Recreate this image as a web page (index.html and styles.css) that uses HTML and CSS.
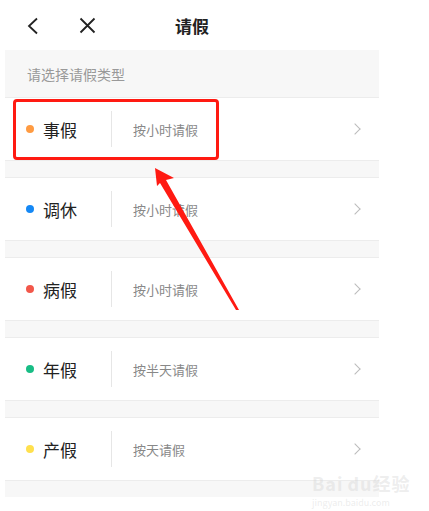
FILE: index.html
```html
<!DOCTYPE html>
<html lang="zh-CN">
<head>
  <meta charset="UTF-8" />
  <meta name="viewport" content="width=device-width, initial-scale=1.0" />
  <title>请假</title>
  <link rel="stylesheet" href="styles.css">
</head>
<body>
  <div class="phone">
    <!-- 顶部导航 -->
    <div class="header">
      <div class="nav-left">
        <svg class="icon-back" width="12" height="18" viewBox="0 0 12 18">
          <polyline points="10,1.5 2,9 10,16.5" fill="none" stroke="#222" stroke-width="1.8" />
        </svg>
        <svg class="icon-close" width="17" height="17" viewBox="0 0 17 17">
          <path d="M1.5 1.5 L15.5 15.5 M15.5 1.5 L1.5 15.5" fill="none" stroke="#222" stroke-width="1.8" />
        </svg>
      </div>
      <h1 class="title">请假</h1>
      <div class="nav-right"></div>
    </div>

    <div class="section-label">请选择请假类型</div>

    <div class="list">
      <div class="row">
        <span class="dot orange"></span>
        <span class="name">事假</span>
        <span class="divider"></span>
        <span class="desc">按小时请假</span>
        <span class="chevron"></span>
      </div>
      <div class="row">
        <span class="dot blue"></span>
        <span class="name">调休</span>
        <span class="divider"></span>
        <span class="desc">按小时请假</span>
        <span class="chevron"></span>
      </div>
      <div class="row">
        <span class="dot red"></span>
        <span class="name">病假</span>
        <span class="divider"></span>
        <span class="desc">按小时请假</span>
        <span class="chevron"></span>
      </div>
      <div class="row">
        <span class="dot green"></span>
        <span class="name">年假</span>
        <span class="divider"></span>
        <span class="desc">按半天请假</span>
        <span class="chevron"></span>
      </div>
      <div class="row">
        <span class="dot yellow"></span>
        <span class="name">产假</span>
        <span class="divider"></span>
        <span class="desc">按天请假</span>
        <span class="chevron"></span>
      </div>
    </div>
  </div>

  <!-- 标注 -->
  <div class="mark-box"></div>
  <svg class="mark-arrow" width="429" height="511" viewBox="0 0 429 511">
    <polygon points="155,168 174,178 166,180 239,310 236,310 160,183 157,186" fill="#ff1a12" />
  </svg>

  <div class="watermark">
    <div class="wm-logo">Bai<span class="wm-paw">du</span>经验</div>
    <div class="wm-url">jingyan.baidu.com</div>
  </div>
</body>
</html>
```

FILE: styles.css
```css
* {
  margin: 0;
  padding: 0;
  box-sizing: border-box;
  font-family: "Noto Sans CJK SC", "Noto Sans", sans-serif;
}
body {
  background: #fff;
  position: relative;
  height: 511px;
  overflow: hidden;
}
.phone {
  width: 374px;
  margin-left: 5px;
  background: #f7f7f7;
  padding-bottom: 16px;
}
.header {
  height: 50px;
  display: flex;
  align-items: center;
  background: #fff;
}
.nav-left,
.nav-right {
  width: 100px;
}
.nav-left {
  display: flex;
  align-items: center;
  padding-left: 22px;
  gap: 40px;
}
.icon-back {
  margin-top: 1px;
}
.title {
  flex: 1;
  text-align: center;
  font-size: 17px;
  font-weight: bold;
  color: #222;
  line-height: 1;
}
.section-label {
  height: 47px;
  padding-left: 22px;
  display: flex;
  align-items: center;
  font-size: 14px;
  color: #999;
}
.list {
  display: flex;
  flex-direction: column;
  gap: 16px;
}
.row {
  height: 64px;
  background: #fff;
  border-top: 1px solid #ececec;
  border-bottom: 1px solid #ececec;
  display: flex;
  align-items: center;
  padding-left: 21px;
  padding-right: 17px;
}
.dot {
  width: 8px;
  height: 8px;
  border-radius: 50%;
  margin-right: 9px;
}
.orange { background: #ff9b42; }
.blue { background: #1588f5; }
.red { background: #f2574a; }
.green { background: #18bd85; }
.yellow { background: #ffe04d; }
.name {
  width: 68px;
  font-size: 17px;
  color: #222;
}
.divider {
  width: 1px;
  align-self: stretch;
  margin: 13px 0;
  background: #e6e6e6;
}
.desc {
  flex: 1;
  margin-left: 21px;
  font-size: 13px;
  color: #888;
}
.chevron {
  width: 8px;
  height: 8px;
  border-top: 1px solid #bbb;
  border-right: 1px solid #bbb;
  transform: rotate(45deg);
  margin-right: 3px;
}
.mark-box {
  position: absolute;
  left: 13px;
  top: 99px;
  width: 206px;
  height: 61px;
  border: 3px solid #ff1a12;
  border-radius: 4px;
}
.mark-arrow {
  position: absolute;
  left: 0;
  top: 0;
}
.watermark {
  position: absolute;
  left: 312px;
  top: 470px;
  color: rgba(210, 210, 210, 0.4);
  font-family: "Liberation Sans", sans-serif;
}
.wm-logo {
  font-size: 18px;
  font-weight: bold;
  letter-spacing: 1px;
}
.wm-paw {
  margin-left: 4px;
}
.wm-url {
  font-size: 9px;
}
```
